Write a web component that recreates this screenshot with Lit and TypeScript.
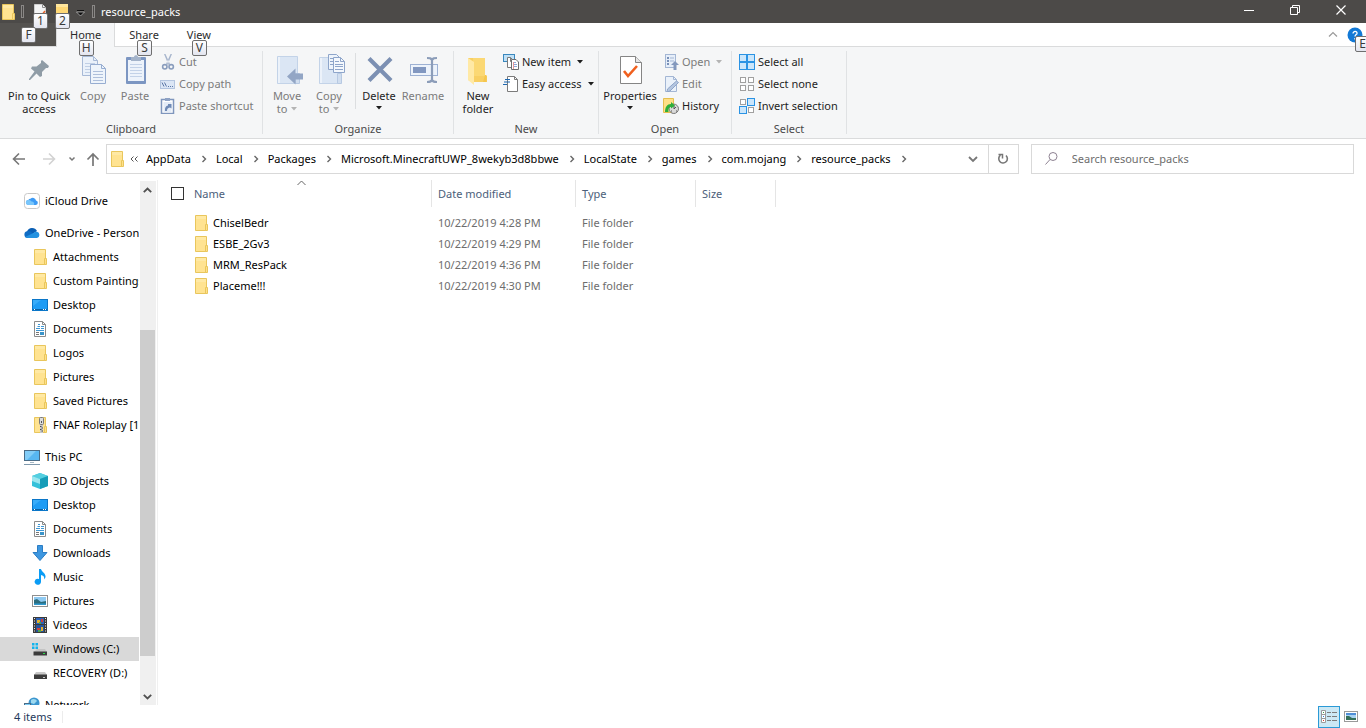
import { LitElement, html, css, svg, nothing } from "lit";
import type { TemplateResult } from "lit";
import { customElement, state } from "lit/decorators.js";
import { classMap } from "lit/directives/class-map.js";

const page = (x: number, y: number, w: number, h: number, stroke: string, fill: string, line: string) => svg`
  <path d="M${x + 0.5} ${y + 0.5}h${w - 5}l4 4v${h - 5}h-${w - 1}z" fill=${fill} stroke=${stroke}/>
  <path d="M${x + w - 4.5} ${y + 0.5}v4h4" fill="none" stroke=${stroke}/>
  ${line ? svg`<path d="M${x + 3} ${y + 7.5}h${w - 6}M${x + 3} ${y + 10.5}h${w - 6}M${x + 3} ${y + 13.5}h${w - 6}M${x + 3} ${y + 16.5}h${w - 6}" stroke=${line}/>` : nothing}`;

const square = (x: number, y: number, on: boolean, s = 5) => svg`
  <rect x=${x + 0.5} y=${y + 0.5} width=${s} height=${s} fill=${on ? "#cbe6fb" : "#fff"} stroke=${on ? "#2a93e4" : "#a0a0a0"}/>`;

/* 16 pixel glyphs */
const small: Record<string, unknown> = {
  folder: svg`
    <path d="M2.5 .5h11v15h-11z" fill="#ffe391" stroke="#e9c65c"/>
    <path d="M3 1h10v3H3z" fill="#ffe9a4"/>
    <path d="M12.5 9.5h2v6h-2z" fill="#ffe08a" stroke="#e9c65c"/>`,
  zip: svg`
    <path d="M2.5 .5h11v15h-11z" fill="#ffe391" stroke="#e9c65c"/>
    <path d="M12.5 9.5h2v6h-2z" fill="#ffe08a" stroke="#e9c65c"/>
    <rect x="8" y="0" width="3" height="16" fill="#c9c9c9"/>
    <path d="M8 9.500h1.500M9.500 11h1.500M8 12.500h1.500M9.500 14h1.500" stroke="#4c4c4c"/>
    <rect x="7.500" y=".5" width="4" height="7" rx="1" fill="#dcdcdc" stroke="#7a7a7a"/>
    <rect x="9" y="4" width="1" height="2" fill="#555"/>`,
  icloud: svg`
    <rect x=".5" y=".5" width="15" height="15" rx="3" fill="#fff" stroke="#c8c8c8"/>
    <path d="M4.500 12a2.500 2.500 0 0 1-.2-5 2.200 2.200 0 0 1 2.200-1.300A3.300 3.300 0 0 1 12 7.500a2.300 2.300 0 0 1 0 4.500z" fill="#3d9bf5"/>
    <path d="M4.500 12a2.500 2.500 0 0 1-.2-5 2.800 2.800 0 0 1 3.200 1.500A2.500 2.500 0 0 1 10 12z" fill="#79c6fb"/>`,
  onedrive: svg`
    <path d="M3 6.500A5.500 5.500 0 0 1 13 6l-6 4z" fill="#0a5fb4"/>
    <path d="M3.500 13A3.500 3.500 0 0 1 2.800 6.200 4.500 4.500 0 0 1 7 6.800L13 13z" fill="#0f6cc4"/>
    <path d="M1 12 9.500 8a3.800 3.800 0 0 1 3.500-1.200 3.200 3.200 0 0 1 0 6.200H4z" fill="#2492e0"/>`,
  desktop: svg`
    <rect x=".5" y="2.500" width="15" height="11" fill="#1e9cf5" stroke="#0b76c8"/>
    <path d="M1 3h8L1 9z" fill="#38acfa"/>
    <path d="M1 12.500h14" stroke="#0a63a8"/><path d="M2 12.500h1M11 12.500h1M13 12.500h1" stroke="#fff"/>`,
  document: svg`
    <path d="M2.500 .5h8l3 3v12h-11z" fill="#fff" stroke="#8b8b8b"/><path d="M10.500 .5v3h3" fill="none" stroke="#8b8b8b"/>
    <path d="M4 7.500h4M6 3.500h2M5.500 5.500h2.500M9 5.500h3M9 7.500h3M4 9.500h8" fill="none" stroke="#3f97d4"/>
    <path d="M4 11.500h3M4 13.500h3" stroke="#777"/><rect x="8" y="11" width="4" height="3" fill="#3b94c9"/>`,
  pc: svg`
    <rect x=".5" y="1.500" width="15" height="10" fill="#58b7f2" stroke="#4a6c87"/>
    <path d="M1 2h11L3 11H1z" fill="#82cdf8"/>
    <path d="M6 13.500h4" stroke="#a6b8c5"/><path d="M0 15.500h16" stroke="#7f99ad"/>`,
  cube: svg`
    <path d="M8 0l8 3v10l-8 3-8-3V3z" fill="#35c1da"/>
    <path d="M8 0l8 3-8 3-8-3z" fill="#54cfe0"/><path d="M8 6l8-3v10l-8 3z" fill="#159cb8"/>
    <path d="M0 3l8 3v5L0 8z" fill="#9ae6ef"/>`,
  down: svg`<path d="M5.500 .5h5v7h4.500L8 15.500 1 7.500h4.500z" fill="#3d97e0" stroke="#2b7dc4"/>`,
  music: svg`<path d="M7 0h2c.5 3 5 4 4.500 8-.2 1-1 2-1.500 2.500.7-2.500-.5-4-3-4.500V13a3.200 3 0 1 1-2-3z" fill="#0a9cf5"/>`,
  picture: svg`
    <rect x=".5" y="2.500" width="15" height="11" fill="#fff" stroke="#8f8f8f"/>
    <rect x="2" y="4" width="12" height="8" fill="#8fcaf2"/>
    <path d="M2 7l3-1 4 3 5-1v4H2z" fill="#2c6d7e"/><path d="M2 10.500h12V12H2z" fill="#2f9ad0"/>`,
  video: svg`
    <rect x="1" y="0" width="14" height="16" fill="#3b3b3b"/>
    <path d="M2.500 1v14M13.500 1v14" stroke="#e8e8e8" stroke-dasharray="1 1.500"/>
    <rect x="4" y="1" width="8" height="6" fill="#2d62b8"/><rect x="4" y="8" width="8" height="7" fill="#26549c"/>
    <path d="M5 3h3v3H5zM9 10h2v4H9z" fill="#e3b02e"/><path d="M9 2h2v3H9zM5 11h3v2H5z" fill="#cf3f38"/><path d="M7 5h2v2H7zM6 13h3v2H6z" fill="#4ea34b"/>`,
  windrive: svg`
    <path d="M0 2h2.500v2.500H0zM3.500 2H6v2.500H3.500zM0 5.500h2.500V8H0zM3.500 5.500H6V8H3.500z" fill="#12b4ee"/>
    <path d="M5 8h8l2 3H2z" fill="#c4c4c4"/><path d="M1.500 10.500h13.500v4H1.500z" fill="#3c3c3c"/><path d="M11 12h2v1h-2z" fill="#2ae04a"/>`,
  drive: svg`
    <path d="M4 7h9l2 3H2z" fill="#c9c9c9"/><path d="M2 9.500h13v4.500H2z" fill="#3c3c3c"/><path d="M11 12h2v1h-2z" fill="#c8c8c8"/>`,
  network: svg`
    <circle cx="10" cy="6" r="5.500" fill="#3c96cf"/><path d="M7 3c2-2 5-1 6 1l-3 3-3-1z" fill="#9ed9ef"/>
    <path d="M0 6h7v7H0z" fill="#4a6c87"/><path d="M1 7h5v4H1z" fill="#7cccf5"/><path d="M5 14h10" stroke="#7f99ad"/>`,
  cut: svg`
    <path d="M4 0l1.500 0 4.500 10-1.500 1zM12 0h-1.500L6 10l1.500 1z" fill="#a8b6cd"/>
    <circle cx="4.800" cy="12.800" r="2.200" fill="none" stroke="#8a9dbd" stroke-width="1.600"/>
    <circle cx="11.200" cy="12.800" r="2.200" fill="none" stroke="#8a9dbd" stroke-width="1.600"/>`,
  path: svg`
    <rect x=".5" y="4.500" width="14" height="8" fill="#dbe6f5" stroke="#b3c5df"/>
    <path d="M2 6.500l2 4M4.500 6.500l2 4" stroke="#5b77a6" fill="none"/><path d="M8 10.500h1M10 10.500h1M12 10.500h1" stroke="#5b77a6"/>`,
  shortcut: svg`
    <rect x="1.500" y="1.500" width="12" height="14" fill="#fff" stroke="#7f96bd" stroke-width="1.500"/>
    <rect x="3.500" y="4" width="8" height="10" fill="#e4ecf7"/><rect x="5" y="0" width="5" height="3" fill="#8ea2c4"/>
    <path d="M5 13c-.3-3.500.7-5 3-5.500V6h3.500v4.500L10 9.500C7.500 10 7 11 7 13z" fill="#6f8ab6"/>`,
  newitem: svg`
    <rect x=".5" y=".5" width="11" height="7" fill="#bfe0f6" stroke="#3a87bd"/>
    ${page(4, 3, 8, 11, "#7b7b7b", "#fff", "")}
    <path d="M8.500 5.500h4.500l2.500 2.500v7.500h-7z" fill="#fff" stroke="#6e6e6e"/>
    <path d="M10 8.500h3M10 10.500h4M10 12.500h4" stroke="#8fa8d8"/><path d="M10.500 8v7" stroke="#e79a9a"/>`,
  easy: svg`
    <path d="M4.500 .5h7l3 3v12h-10z" fill="#fff" stroke="#7b7b7b"/><path d="M11.500 .5v3h3" fill="none" stroke="#7b7b7b"/>
    <path d="M0 8.500h4M1 6h6M2 3.500h5" stroke="#1e68b0"/>`,
  open: svg`
    <rect x="2.500" y=".5" width="10" height="13" fill="#e6eef9" stroke="#a3b6d4"/>
    <path d="M4 3h2v2H4zM4 6h2v2H4zM4 9h2v2H4z" fill="#7890b8"/><path d="M7 4h4M7 7h4" stroke="#a3b6d4"/>
    <path d="M12 7l4 4h-2.500v5h-3v-5H8z" fill="#8398bd"/>`,
  edit: svg`
    <path d="M2.500 .5h8l3 3v12h-11z" fill="#eaf1fa" stroke="#a3b6d4"/><path d="M10.500 .5v3h3" fill="none" stroke="#a3b6d4"/>
    <path d="M13.500 5l2 1.500L7 15l-3 1 .5-3z" fill="#b4c6e0" stroke="#8ea4c8"/>`,
  history: svg`
    <path d="M.5 .5h10v14H.5z" fill="#ffdf86" stroke="#e5bf4e"/>
    <circle cx="10.800" cy="10.800" r="4.700" fill="#d9d9d9" stroke="#777"/><path d="M11 8v3l2-2M8 13h1M13 13h1" fill="none" stroke="#555"/>
    <path d="M2 14c0-5 2-8 6-8V4l4 3.500-4 3V9c-2 0-3 2-2.500 5z" fill="#2fae3a"/>`,
  all: svg`${square(0, 0, true, 7)}${square(8, 0, true, 7)}${square(0, 8, true, 7)}${square(8, 8, true, 7)}`,
  none: svg`${square(1, 1, false)}${square(9, 1, false)}${square(1, 9, false)}${square(9, 9, false)}`,
  invert: svg`${square(1, 1, false)}${square(8, 0, true, 7)}${square(0, 8, true, 7)}${square(9, 9, false)}`,
  search: svg`<circle cx="9" cy="5.500" r="4" fill="none" stroke="#8e8292"/><path d="M6 8.500L1.500 13.500" stroke="#8e8292" fill="none"/>`,
  refresh: svg`<path d="M11 4.500a4.300 4.300 0 1 1-5.500-.3" fill="none" stroke="#777" stroke-width="1.600"/><path d="M3.500 3.500h4v4" fill="none" stroke="#777" stroke-width="1.500"/>`,
  back: svg`<path d="M14 8H3M8 2.500L2.500 8 8 13.500" fill="none" stroke="#777" stroke-width="1.600"/>`,
  forward: svg`<path d="M2 8h11M8 2.500L13.500 8 8 13.500" fill="none" stroke="#d2d2d2" stroke-width="1.600"/>`,
  up: svg`<path d="M8 15V3M2.500 8.500L8 3l5.500 5.500" fill="none" stroke="#777" stroke-width="1.700"/>`,
  chevdown: svg`<path d="M5.500 6.500L8 9l2.500-2.500" fill="none" stroke="#777" stroke-width="1.500"/>`,
  chevwide: svg`<path d="M4 6l4 4 4-4" fill="none" stroke="#777" stroke-width="1.800"/>`,
  chevup: svg`<path d="M4 9.500L8 5.500l4 4" fill="none" stroke="#9a9a9a" stroke-width="1.200"/>`,
  min: svg`<path d="M3 8.500h10" stroke="#fff"/>`,
  restore: svg`<path d="M3.500 5.500h7v7h-7zM5.500 5.500v-2h7v7h-2" fill="none" stroke="#fff"/>`,
  close: svg`<path d="M3.500 3.500l9 9M12.500 3.500l-9 9" stroke="#fff" stroke-width="1.200"/>`,
  help: svg`<circle cx="8" cy="8" r="7.500" fill="#1279d6"/><path d="M6 6.500c0-3 4.500-2.500 4 0-.3 1.200-2 1.200-2 3M8 11v1.500" fill="none" stroke="#fff" stroke-width="1.300"/>`,
  details: svg`
    <path d="M.5 1.500h4v12h-4zM.5 5.500h4M.5 9.500h4" fill="#fff" stroke="#9a9a9a"/>
    <path d="M2 3.500h1" stroke="#3f9b48"/><path d="M2 7.500h1" stroke="#2f7fd6"/><path d="M2 11.500h1" stroke="#d83a2e"/>
    <path d="M6 3.500h4M11 3.500h5M6 7.500h4M11 7.500h5M6 11.500h4M11 11.500h5" stroke="#7c7c7c"/>`,
  thumbs: svg`
    <rect x="1.500" y="2.500" width="13" height="10" fill="#fff" stroke="#9a9a9a"/><rect x="3" y="4" width="10" height="7" fill="#a8d2f2"/>
    <path d="M3 4h10v2H3z" fill="#4f8fd8"/><path d="M3 7l3 0 3 2h4v2H3z" fill="#35705a"/>`,
  qdoc: svg`<path d="M2.500 .5h8l3 3v12h-11z" fill="#f4f4f4" stroke="#cfcfcf"/><path d="M10.500 .5v3h3" fill="none" stroke="#8a8a8a"/><path d="M7 10l2 2 4-5" fill="none" stroke="#e8622a" stroke-width="1.500"/>`,
  qfolder: svg`<path d="M2 0h12v15H2z" fill="#ffd875"/><path d="M2 0h12v3H2z" fill="#ffe69c"/>`,
};

/* 32 pixel glyphs */
const large: Record<string, unknown> = {
  pin: svg`<path d="M19 6l7 6-1 2h-2l-4 4v4l-2 1-3.500-3.500L7 26l-1 0v-1l5.500-7.500L8 14.500l1-2h4.500L18 9V7z" fill="#8f9ca6"/>`,
  copy: svg`${page(5, 2, 16, 20, "#a7b9d6", "#eaf1fa", "#c0cfe5")}${page(13, 10, 16, 20, "#97add1", "#eef4fb", "#aebfdb")}`,
  paste: svg`
    <rect x="7" y="3" width="20" height="27" rx="1" fill="#7c96c2"/><rect x="9" y="6" width="16" height="21" fill="#edf3fb"/>
    <path d="M11 10.500h12M11 13.500h12M11 16.500h12M11 19.500h12M11 22.500h12" stroke="#c3d2e8"/>
    <path d="M12 3h3c0-2.500 4-2.500 4 0h3v4H12z" fill="#a3b3ca"/>`,
  move: svg`
    <path d="M6.500 2.500h20v27h-20z" fill="#dbe6f4" stroke="#c3d3e8"/><path d="M8 3v26" stroke="#ecf2fa" stroke-width="2"/>
    <path d="M24.500 19.500h4v10h-4z" fill="#d1deef" stroke="#b7c9e2"/>
    <path d="M16 22.500l8.500-8v5H32v6h-7.500v5z" fill="#93a6c5"/>`,
  copyto: svg`
    <path d="M6.500 3.500h20v26h-20z" fill="#dbe6f4" stroke="#c3d3e8"/><path d="M8 4v25" stroke="#ecf2fa" stroke-width="2"/>
    <path d="M24.500 19.500h4v10h-4z" fill="#d1deef" stroke="#b7c9e2"/>
    <path d="M15.500 .5h8l3 3v12h-11z" fill="#eef4fb" stroke="#8ea5ca"/><path d="M17 4.500h5M17 7.500h3M17 10.500h3" stroke="#8ea5ca"/>
    <path d="M20.500 3.500h7l4 4v11h-11z" fill="#f4f8fd" stroke="#8ea5ca"/><path d="M27.500 3.500v4h4M22 7.500h4M22 10.500h8M22 12.500h8M22 15.500h8" fill="none" stroke="#8ea5ca"/>`,
  del: svg`<path d="M6 4.500l22 22M28 4.500l-22 22" stroke="#7c90b3" stroke-width="4.200" stroke-linecap="butt"/>`,
  rename: svg`
    <rect x="3.500" y="10.500" width="27" height="11" fill="#edf3fb" stroke="#9db1d3"/><rect x="6" y="13" width="13" height="6" fill="#8197c0"/>
    <path d="M25 5v22M20 4c3 0 4 0 5 2 1-2 2-2 5-2M20 28c3 0 4 0 5-2 1 2 2 2 5 2" fill="none" stroke="#8c9db9" stroke-width="2.200"/>`,
  newfolder: svg`
    <path d="M6 4h17v18h2v6H12L6 26z" fill="#f8cf63"/><path d="M11 4h12v18h-12z" fill="#fbd874"/>
    <path d="M6 4l6 4v23l-6-5z" fill="#ffe9a6"/><path d="M23 21h1.500v7H21z" fill="#f5c64e"/>`,
  props: svg`
    <path d="M6.500 2.500h15l6 6v21h-21z" fill="#fff" stroke="#858585"/><path d="M21.500 2.500v6h6" fill="#e6e6e6" stroke="#858585"/>
    <path d="M10 17l4 5 9-10" fill="none" stroke="#f0601e" stroke-width="2.600"/>`,
};

const glyph = (name: string) => html`<svg class="i16" viewBox="0 0 16 16" aria-hidden="true">${small[name]}</svg>`;
const bigGlyph = (name: string) => html`<svg class="i32" viewBox="0 0 32 32" aria-hidden="true">${large[name]}</svg>`;
const caret = html`<svg class="caret" viewBox="0 0 6 4" aria-hidden="true"><path d="M0 0h6L3 3.500z" fill="currentColor"/></svg>`;

interface NavItem { icon: string; label: string; child?: boolean; gap?: boolean; selected?: boolean }

const NAV: NavItem[] = [
  { icon: "icloud", label: "iCloud Drive" },
  { icon: "onedrive", label: "OneDrive - Personal", gap: true },
  { icon: "folder", label: "Attachments", child: true },
  { icon: "folder", label: "Custom Paintings", child: true },
  { icon: "desktop", label: "Desktop", child: true },
  { icon: "document", label: "Documents", child: true },
  { icon: "folder", label: "Logos", child: true },
  { icon: "folder", label: "Pictures", child: true },
  { icon: "folder", label: "Saved Pictures", child: true },
  { icon: "zip", label: "FNAF Roleplay [1", child: true },
  { icon: "pc", label: "This PC", gap: true },
  { icon: "cube", label: "3D Objects", child: true },
  { icon: "desktop", label: "Desktop", child: true },
  { icon: "document", label: "Documents", child: true },
  { icon: "down", label: "Downloads", child: true },
  { icon: "music", label: "Music", child: true },
  { icon: "picture", label: "Pictures", child: true },
  { icon: "video", label: "Videos", child: true },
  { icon: "windrive", label: "Windows (C:)", child: true, selected: true },
  { icon: "drive", label: "RECOVERY (D:)", child: true },
  { icon: "network", label: "Network", gap: true },
];

const CRUMBS = ["AppData", "Local", "Packages", "Microsoft.MinecraftUWP_8wekyb3d8bbwe", "LocalState", "games", "com.mojang", "resource_packs"];

const FILES = [
  { name: "ChiselBedr", date: "10/22/2019 4:28 PM" },
  { name: "ESBE_2Gv3", date: "10/22/2019 4:29 PM" },
  { name: "MRM_ResPack", date: "10/22/2019 4:36 PM" },
  { name: "Placeme!!!", date: "10/22/2019 4:30 PM" },
];

@customElement("app-root")
export class AppRoot extends LitElement {
  @state() private allChecked = false;

  static styles = css`
    :host {
      display: flex;
      flex-direction: column;
      height: 100vh;
      overflow: hidden;
      background: #fff;
      color: #000;
      font: 11px/16px "Noto Sans", "Open Sans", sans-serif;
    }
    * { box-sizing: border-box; }
    button, input { font: inherit; color: inherit; margin: 0; }
    button { border: 0; padding: 0; background: none; text-align: left; white-space: nowrap; }
    svg { display: block; flex: none; }
    .i16 { width: 16px; height: 16px; }
    .i32 { width: 32px; height: 32px; }
    .caret { width: 6px; height: 4px; }

    .title { display: flex; align-items: center; height: 23px; flex: none; background: #4c4a48; color: #fff; }
    .title .app { margin: 0 5px 0 0; }
    .bar { width: 3px; height: 13px; border: 1px solid #8a8886; flex: none; }
    .quick { position: relative; width: 22px; height: 16px; display: flex; justify-content: center; }
    .quick.first { margin-left: 5px; }
    .more { width: 9px; height: 6px; margin: 2px 7px 0 3px; }
    .title h1 { margin: 0 0 0 6px; font-size: 11px; font-weight: 400; flex: 1; }
    .wins { display: flex; padding-right: 2px; height: 100%; }
    .wins button { width: 46px; display: grid; place-items: center; padding-bottom: 3px; }

    .tip {
      position: absolute;
      z-index: 2;
      width: 15px;
      height: 16px;
      border: 1px solid #6f6f6f;
      border-radius: 2px;
      background: linear-gradient(#fff, #e3e5ef);
      color: #3a3a3a;
      font-size: 12px;
      text-align: center;
      line-height: 14px;
    }
    .quick .tip { left: 4px; top: 9px; }
    .tab .tip { left: calc(50% - 7px); top: 17px; }
    .tab.file .tip { top: 4px; }
    .help .tip { left: 8px; top: 9px; }

    .tabs { display: flex; height: 24px; flex: none; border-bottom: 1px solid #dadbdc; background: #fff; }
    .tab { position: relative; padding: 0 14px; color: #2b2b2b; height: 23px; }
    .tab.file { width: 56px; background: #555350; }
    .tab.on { height: 24px; padding: 0 13px 1px; background: #f5f6f7; border: 1px solid #dadbdc; border-width: 0 1px; }
    .tabend { margin-left: auto; display: flex; align-items: center; gap: 6px; margin-right: 3px; }
    .help { position: relative; }

    .ribbon { display: flex; height: 92px; flex: none; background: #f5f6f7; border-bottom: 1px solid #dadbdc; padding: 4px 0; }
    .group { display: flex; flex-direction: column; border-right: 1px solid #e0e2e4; color: #1e1e1e; flex: none; }
    .clip { width: 263px; } .org { width: 191px; } .new { width: 145px; } .opn { width: 133px; } .sel { width: 115px; }
    .cells { display: flex; padding-left: 3px; height: 66px; flex: none; }
    .clip .cells { padding-left: 6px; }
    .opn .cells { padding-left: 2px; }
    .group h2 { margin: 4px 0 0; font-size: 11px; font-weight: 400; text-align: center; color: #4a4a4a; }
    .big { display: flex; flex: none; flex-direction: column; align-items: center; gap: 3px; width: 42px; padding-top: 3px; line-height: 13px; text-align: center; }
    .big .lines { display: flex; flex-direction: column; align-items: center; }
    .big .line { display: flex; align-items: center; justify-content: center; gap: 4px; min-height: 12px; }
    .wide { width: 66px; } .mid { width: 46px; } .prop { width: 58px; }
    .off { color: #7b7b7b; }
    .off .caret { color: #b4b4b4; }
    .rule { width: 1px; height: 56px; margin: 2px 2px 0 5px; background: #dcdee0; }
    .stack { display: flex; flex-direction: column; padding-left: 4px; }
    .row { display: flex; align-items: center; gap: 3px; height: 22px; }
    .row .caret { margin-left: 3px; }

    .address { display: grid; grid-template-columns: 106px minmax(0, 48fr) 12px minmax(0, 17fr); height: 41px; flex: none; padding: 5px 12px 6px 0; }
    .go { display: flex; align-items: center; padding-left: 11px; }
    .go button:nth-child(2) { margin-left: 14px; }
    .go button:nth-child(3) { margin-left: 7px; }
    .go button:nth-child(4) { margin-left: 5px; }
    .path { display: flex; align-items: center; border: 1px solid #d9d9d9; min-width: 0; }
    .path ol { display: flex; align-items: center; list-style: none; margin: 0; padding: 0; flex: 1; min-width: 0; overflow: hidden; }
    .path li { display: flex; align-items: center; }
    .path .lead { margin: 0 5px 0 2px; }
    .sep { width: 25px; height: 8px; }
    .double { width: 8px; height: 8px; margin-right: 8px; }
    .path .drop { width: 29px; display: grid; place-items: center; }
    .path .redo { width: 30px; height: 100%; border-left: 1px solid #d9d9d9; display: grid; place-items: center; }
    .search { grid-column: 4; display: flex; align-items: center; gap: 12px; padding-left: 12px; border: 1px solid #d9d9d9; }
    .search input { flex: 1; min-width: 0; border: 0; padding: 0; outline: 0; background: none; }
    .search input::placeholder { color: #6d6d6d; opacity: 1; }

    .body { flex: 1; display: flex; min-height: 0; }
    .nav { width: 139px; flex: none; overflow: hidden; padding-top: 9px; }
    .nav a { display: flex; align-items: center; gap: 5px; height: 24px; padding-left: 24px; color: inherit; text-decoration: none; white-space: nowrap; }
    .nav a.child { padding-left: 32px; }
    .nav a.gap { margin-top: 8px; }
    .nav a.selected { background: #d9d9d9; }
    .scroll { width: 16px; margin: 1px 0 0 1px; flex: none; display: flex; flex-direction: column; background: #f0f0f0; }
    .scroll button { height: 17px; display: grid; place-items: center; padding-right: 1px; }
    .track { flex: 1; display: grid; grid-template-rows: 54fr 133fr 13fr; }
    .thumb { grid-row: 2; background: #cdcdcd; width: 15px; }
    .list { flex: 1; min-width: 0; margin-left: 1px; border-left: 1px solid #f0f0f0; }
    table { width: 100%; border-collapse: collapse; table-layout: fixed; }
    .c0 { width: 35px; } .c1 { width: 239px; } .c2 { width: 144px; } .c3 { width: 120px; } .c4 { width: 80px; }
    th { height: 27px; padding: 0 0 0 6px; font-weight: 400; text-align: left; color: #4c607a; position: relative; }
    th.name { padding-left: 1px; }
    th.line { box-shadow: inset -1px 0 #e5e5e5; }
    .sort { position: absolute; left: 104px; top: 0; width: 9px; height: 6px; }
    tbody::before { content: ""; display: block; height: 5px; }
    td { height: 21px; padding: 0 0 0 6px; color: #6d6d6d; white-space: nowrap; }
    td.name { padding: 0; color: #000; }
    .file-name { display: flex; align-items: center; gap: 4px; }
    .check { appearance: none; display: block; width: 13px; height: 13px; border: 1px solid #333; background: #fff; margin-left: 7px; }
    .check:checked { background: #0078d7; }

    .status { display: flex; align-items: center; height: 23px; flex: none; padding: 0 5px 0 14px; color: #1e395b; }
    .status span { padding-right: 10px; border-right: 1px solid #ececec; line-height: 12px; margin-top: 1px; }
    .views { margin-left: auto; display: flex; height: 22px; }
    .views button { display: grid; place-items: center; width: 21px; border: 1px solid transparent; }
    .views .on { width: 22px; border-color: #2b9ad6; background: #cce8f4; }
  `;

  private big(icon: string, lines: unknown[], cls = "", off = false) {
    return html`<button class="big ${cls} ${off ? "off" : ""}">
      ${bigGlyph(icon)}<span class="lines">${lines.map((l) => html`<span class="line">${l}</span>`)}</span>
    </button>`;
  }

  private row(icon: string, label: string, off = false, menu = false): TemplateResult {
    return html`<button class="row ${off ? "off" : ""}">${glyph(icon)}<span>${label}</span>${menu ? caret : nothing}</button>`;
  }

  private renderTitle() {
    return html`<header class="title">
      <svg class="i16 app" viewBox="0 0 16 16" aria-hidden="true">${small.folder}</svg>
      <i class="bar"></i>
      <button class="quick first" aria-label="Properties">${glyph("qdoc")}<span class="tip">1</span></button>
      <button class="quick" aria-label="New folder">${glyph("qfolder")}<span class="tip">2</span></button>
      <svg class="more" viewBox="0 0 9 6" aria-hidden="true"><path d="M1 .5h7" stroke="#111"/><path d="M.5 2h8l-4 4z" fill="#111" stroke="#ddd" stroke-width=".6"/></svg>
      <i class="bar"></i>
      <h1>resource_packs</h1>
      <div class="wins">
        <button aria-label="Minimize">${glyph("min")}</button>
        <button aria-label="Restore">${glyph("restore")}</button>
        <button aria-label="Close">${glyph("close")}</button>
      </div>
    </header>`;
  }

  private renderRibbon() {
    return html`
      <nav class="tabs" aria-label="Ribbon tabs">
        <button class="tab file" aria-label="File"><span class="tip">F</span></button>
        <button class="tab on">Home<span class="tip">H</span></button>
        <button class="tab">Share<span class="tip">S</span></button>
        <button class="tab">View<span class="tip">V</span></button>
        <div class="tabend">
          <button aria-label="Collapse ribbon">${glyph("chevup")}</button>
          <button class="help" aria-label="Help">${glyph("help")}<span class="tip">E</span></button>
        </div>
      </nav>
      <div class="ribbon">
        <section class="group clip">
          <div class="cells">
            ${this.big("pin", ["Pin to Quick", "access"], "wide")}
            ${this.big("copy", ["Copy"], "", true)}
            ${this.big("paste", ["Paste"], "", true)}
            <div class="stack">${this.row("cut", "Cut", true)}${this.row("path", "Copy path", true)}${this.row("shortcut", "Paste shortcut", true)}</div>
          </div>
          <h2>Clipboard</h2>
        </section>
        <section class="group org">
          <div class="cells">
            ${this.big("move", ["Move", html`to ${caret}`], "", true)}
            ${this.big("copyto", ["Copy", html`to ${caret}`], "", true)}
            <i class="rule"></i>
            ${this.big("del", ["Delete", caret])}
            ${this.big("rename", ["Rename"], "mid", true)}
          </div>
          <h2>Organize</h2>
        </section>
        <section class="group new">
          <div class="cells">
            ${this.big("newfolder", ["New", "folder"])}
            <div class="stack">${this.row("newitem", "New item", false, true)}${this.row("easy", "Easy access", false, true)}</div>
          </div>
          <h2>New</h2>
        </section>
        <section class="group opn">
          <div class="cells">
            ${this.big("props", ["Properties", caret], "prop")}
            <div class="stack">${this.row("open", "Open", true, true)}${this.row("edit", "Edit", true)}${this.row("history", "History")}</div>
          </div>
          <h2>Open</h2>
        </section>
        <section class="group sel">
          <div class="cells">
            <div class="stack">${this.row("all", "Select all")}${this.row("none", "Select none")}${this.row("invert", "Invert selection")}</div>
          </div>
          <h2>Select</h2>
        </section>
      </div>`;
  }

  private renderAddress() {
    return html`<div class="address">
      <div class="go">
        <button aria-label="Back">${glyph("back")}</button>
        <button aria-label="Forward">${glyph("forward")}</button>
        <button aria-label="Recent locations">${glyph("chevdown")}</button>
        <button aria-label="Up">${glyph("up")}</button>
      </div>
      <div class="path">
        <svg class="i16 lead" viewBox="0 0 16 16" aria-hidden="true">${small.folder}</svg>
        <svg class="double" viewBox="0 0 8 8" aria-hidden="true"><path d="M3.500 1.500L1 4l2.500 2.500M7.500 1.500L5 4l2.500 2.500" fill="none" stroke="#555"/></svg>
        <ol>
          ${CRUMBS.map((c) => html`<li><button>${c}</button><svg class="sep" viewBox="0 0 25 8" aria-hidden="true"><path d="M11.500 1l3 3-3 3" fill="none" stroke="#666" stroke-width="1.400"/></svg></li>`)}
        </ol>
        <button class="drop" aria-label="Previous locations">${glyph("chevwide")}</button>
        <button class="redo" aria-label="Refresh">${glyph("refresh")}</button>
      </div>
      <label class="search">${glyph("search")}<input type="text" aria-label="Search resource_packs" placeholder="Search resource_packs" /></label>
    </div>`;
  }

  private renderBody() {
    return html`<main class="body">
      <nav class="nav" aria-label="Folders">
        ${NAV.map((n) => html`<a href="#" class=${classMap({ child: !!n.child, gap: !!n.gap, selected: !!n.selected })}>${glyph(n.icon)}<span>${n.label}</span></a>`)}
      </nav>
      <div class="scroll">
        <button aria-label="Scroll up"><svg width="9" height="6" viewBox="0 0 9 6"><path d="M.8 5.200L4.500 1.500l3.700 3.700" fill="none" stroke="#505050" stroke-width="1.800"/></svg></button>
        <div class="track"><div class="thumb"></div></div>
        <button aria-label="Scroll down"><svg width="9" height="6" viewBox="0 0 9 6"><path d="M.8 .8l3.700 3.700L8.200 .8" fill="none" stroke="#505050" stroke-width="1.800"/></svg></button>
      </div>
      <div class="list">
        <table>
          <colgroup><col class="c0" /><col class="c1" /><col class="c2" /><col class="c3" /><col class="c4" /><col /></colgroup>
          <thead>
            <tr>
              <th><input class="check" type="checkbox" aria-label="Select all items" .checked=${this.allChecked} @change=${() => (this.allChecked = !this.allChecked)} /></th>
              <th class="name line">Name<svg class="sort" viewBox="0 0 9 6"><path d="M.5 5L4.500 1l4 4" fill="none" stroke="#666"/></svg></th>
              <th class="line">Date modified</th>
              <th class="line">Type</th>
              <th class="line">Size</th>
              <th></th>
            </tr>
          </thead>
          <tbody>
            ${FILES.map((f) => html`<tr>
              <td></td>
              <td class="name"><span class="file-name">${glyph("folder")}${f.name}</span></td>
              <td>${f.date}</td>
              <td>File folder</td>
              <td></td>
              <td></td>
            </tr>`)}
          </tbody>
        </table>
      </div>
    </main>`;
  }

  render() {
    return html`${this.renderTitle()}${this.renderRibbon()}${this.renderAddress()}${this.renderBody()}
      <footer class="status">
        <span>4 items</span>
        <div class="views">
          <button class="on" aria-label="Details view">${glyph("details")}</button>
          <button aria-label="Large icons view">${glyph("thumbs")}</button>
        </div>
      </footer>`;
  }
}
